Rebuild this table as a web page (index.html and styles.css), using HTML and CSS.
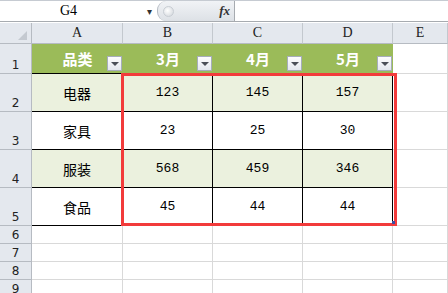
FILE: index.html
```html
<!DOCTYPE html>
<html lang="zh-CN">

<head>
	<meta charset="UTF-8">
	<title>销售表</title>
	<link rel="stylesheet" href="styles.css">
</head>

<body>

	<div class="formula-bar">
		<div class="name-box">
			<span class="cell-ref">G4</span>
			<span class="drop">&#9662;</span>
		</div>
		<div class="bar-tools">
			<span class="knob"></span>
			<span class="fx">fx</span>
		</div>
		<div class="formula-input"></div>
	</div>

	<div class="sheet">
		<div class="grid">
			<!-- column headers -->
			<div class="corner"><span class="corner-mark"></span></div>
			<div class="col-head">A</div>
			<div class="col-head">B</div>
			<div class="col-head">C</div>
			<div class="col-head">D</div>
			<div class="col-head">E</div>

			<!-- row 1: table header -->
			<div class="row-head">1</div>
			<div class="cell th">品类<span class="filter"></span></div>
			<div class="cell th">3月<span class="filter"></span></div>
			<div class="cell th">4月<span class="filter"></span></div>
			<div class="cell th">5月<span class="filter"></span></div>
			<div class="cell empty"></div>

			<div class="row-head">2</div>
			<div class="cell td band name">电器</div>
			<div class="cell td band">123</div>
			<div class="cell td band">145</div>
			<div class="cell td band">157</div>
			<div class="cell empty"></div>

			<div class="row-head">3</div>
			<div class="cell td name">家具</div>
			<div class="cell td">23</div>
			<div class="cell td">25</div>
			<div class="cell td">30</div>
			<div class="cell empty"></div>

			<div class="row-head">4</div>
			<div class="cell td band name">服装</div>
			<div class="cell td band">568</div>
			<div class="cell td band">459</div>
			<div class="cell td band">346</div>
			<div class="cell empty"></div>

			<div class="row-head">5</div>
			<div class="cell td name">食品</div>
			<div class="cell td">45</div>
			<div class="cell td">44</div>
			<div class="cell td">44</div>
			<div class="cell empty"></div>

			<div class="row-head short">6</div>
			<div class="cell empty"></div>
			<div class="cell empty"></div>
			<div class="cell empty"></div>
			<div class="cell empty"></div>
			<div class="cell empty"></div>

			<div class="row-head short">7</div>
			<div class="cell empty"></div>
			<div class="cell empty"></div>
			<div class="cell empty"></div>
			<div class="cell empty"></div>
			<div class="cell empty"></div>

			<div class="row-head short">8</div>
			<div class="cell empty"></div>
			<div class="cell empty"></div>
			<div class="cell empty"></div>
			<div class="cell empty"></div>
			<div class="cell empty"></div>

			<div class="row-head short">9</div>
			<div class="cell empty"></div>
			<div class="cell empty"></div>
			<div class="cell empty"></div>
			<div class="cell empty"></div>
			<div class="cell empty"></div>
		</div>

		<!-- selected range B2:D5 -->
		<div class="selection"><span class="fill-handle"></span></div>
	</div>

</body>

</html>
```

FILE: styles.css
```css
html,
body {
	margin: 0;
	background: #fff;
	overflow: hidden;
}

body {
	font-family: "Noto Sans CJK SC", "DejaVu Sans", sans-serif;
	color: #000;
}

/* name box + formula bar */
.formula-bar {
	display: flex;
	height: 20px;
	border-top: 1px solid #c6cbd2;
	border-bottom: 1px solid #a7abb0;
	background: #fff;
}

.name-box {
	width: 157px;
	display: flex;
	align-items: center;
}

.cell-ref {
	flex: 1;
	text-align: center;
	font-family: "Liberation Serif", serif;
	font-size: 14px;
	padding-right: 10px;
}

.drop {
	font-size: 10px;
	color: #333;
	margin-right: 5px;
	line-height: 1;
}

.bar-tools {
	width: 76px;
	display: flex;
	align-items: center;
	justify-content: space-between;
	background: linear-gradient(#f1f3f6, #dde1e6);
	border-left: 1px solid #b6bcc4;
	border-right: 1px solid #a7abb0;
	border-top-left-radius: 9px;
	border-bottom-left-radius: 9px;
}

.knob {
	width: 9px;
	height: 9px;
	margin-left: 5px;
	border-radius: 50%;
	background: radial-gradient(circle at 40% 40%, #fff, #cfd4da);
	border: 1px solid #c8cdd3;
}

.fx {
	font-family: "Liberation Serif", serif;
	font-style: italic;
	font-weight: bold;
	font-size: 13px;
	color: #333;
	margin-right: 4px;
}

.formula-input {
	flex: 1;
	background: #fff;
}

/* worksheet */
.sheet {
	position: relative;
	margin-top: 1px;
}

.grid {
	display: grid;
	grid-template-columns: 32px 91px 90px 90px 90px 55px;
	grid-template-rows: 21px 30px 38px 38px 38px 38px 18px 18px 18px 18px;
}

.corner,
.col-head,
.row-head {
	background: #e4e8ee;
	box-sizing: border-box;
	border-right: 1px solid #b6bbc2;
	border-bottom: 1px solid #b6bbc2;
	color: #222;
}

.corner {
	position: relative;
}

.corner-mark {
	position: absolute;
	right: 4px;
	bottom: 3px;
	width: 0;
	height: 0;
	border-left: 9px solid transparent;
	border-bottom: 9px solid #c4c9d0;
}

.col-head {
	display: flex;
	align-items: center;
	justify-content: center;
	font-family: "Liberation Serif", serif;
	font-size: 14px;
	border-right-color: #c3c8ce;
}

.row-head {
	display: flex;
	align-items: flex-end;
	justify-content: center;
	padding-bottom: 1px;
	font-family: "DejaVu Sans", sans-serif;
	font-size: 12px;
	line-height: 14px;
}

.row-head.short {
	align-items: center;
	padding-bottom: 0;
}

.cell {
	box-sizing: border-box;
	display: flex;
	align-items: center;
	justify-content: center;
	position: relative;
	font-size: 13px;
}

.empty {
	border-right: 1px solid #d9d9d9;
	border-bottom: 1px solid #d9d9d9;
}

/* table header row */
.th {
	background: #9bbb59;
	color: #fff;
	font-weight: bold;
	font-size: 15px;
	border-bottom: 1px solid #000;
}

.filter {
	position: absolute;
	right: 1px;
	bottom: 2px;
	width: 15px;
	height: 15px;
	box-sizing: border-box;
	border: 1px solid #a6adbb;
	background: linear-gradient(#fdfdfe, #e3e7ee);
}

.filter::after {
	content: "";
	position: absolute;
	left: 3px;
	top: 5px;
	border-left: 4px solid transparent;
	border-right: 4px solid transparent;
	border-top: 4px solid #4a4f58;
}

/* table body */
.td {
	background: #fff;
	border-right: 1px solid #000;
	border-bottom: 1px solid #000;
	font-family: "Liberation Mono", monospace;
	font-size: 13px;
}

.td.band {
	background: #ebf1de;
}

.td.name {
	font-family: "Noto Sans CJK SC", sans-serif;
	font-size: 14px;
}

.selection {
	position: absolute;
	left: 121px;
	top: 50px;
	width: 276px;
	height: 153px;
	box-sizing: border-box;
	border: 3px solid #f23b3b;
	pointer-events: none;
}

.fill-handle {
	position: absolute;
	right: -1px;
	bottom: -1px;
	width: 3px;
	height: 3px;
	background: #3a4fa3;
}
```
